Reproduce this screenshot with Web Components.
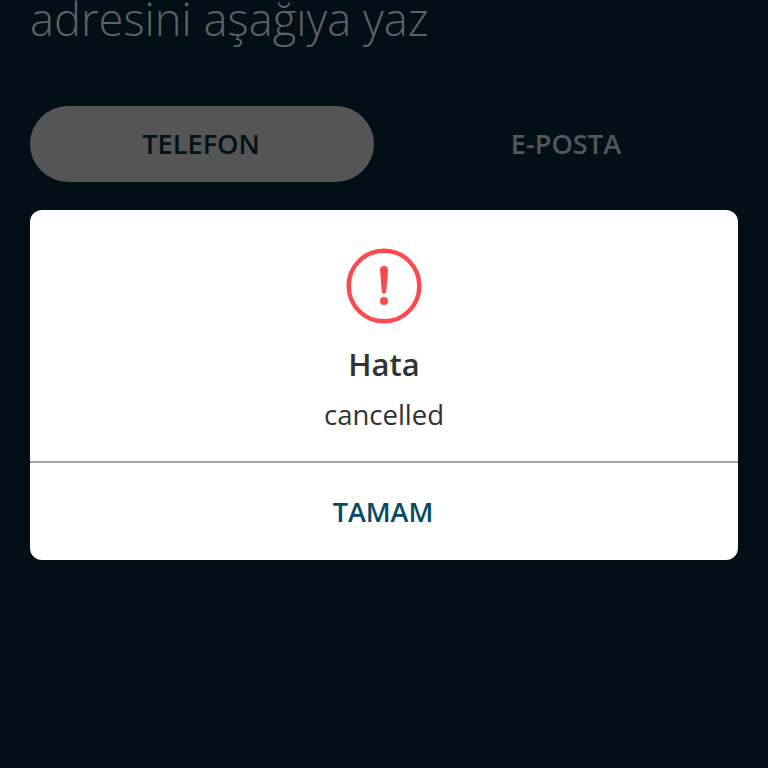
<!DOCTYPE html>
<html lang="tr"><head><meta charset="utf-8"><title>Hata</title>
<style>
html,body{margin:0;height:768px;overflow:hidden;background:#020f16}
body{font-family:"Open Sans","Liberation Sans",sans-serif}
</style></head><body>
<app-screen>
  <page-title>adresini aşağıya yaz</page-title>
  <tab-bar>
    <tab-item active>TELEFON</tab-item>
    <tab-item>E-POSTA</tab-item>
  </tab-bar>
  <alert-dialog heading="Hata" message="cancelled" action="TAMAM"></alert-dialog>
</app-screen>
<script>
function def(name, html, init){
  customElements.define(name, class extends HTMLElement{
    constructor(){super();this.attachShadow({mode:'open'}).innerHTML=html;}
    connectedCallback(){ if(init) init(this); }
  });
}
def('app-screen',`<style>:host{display:flex;flex-direction:column;padding:0 30px;height:768px;box-sizing:border-box;overflow:hidden}</style><slot></slot>`);
def('page-title',`<style>:host{display:block;height:106px;font-size:45.3px;font-weight:300;line-height:38px;color:#5e6264;white-space:nowrap}</style><slot></slot>`);
def('tab-bar',`<style>:host{display:grid;grid-template-columns:1fr 1fr;column-gap:20px;height:76px;margin-bottom:28px}</style><slot></slot>`);
def('tab-item',`<style>:host{display:flex;align-items:center;justify-content:center;border-radius:38px;font-size:27.2px;font-weight:600;color:#51575b;padding-bottom:1px;box-sizing:border-box}
:host([active]){background:#555555;color:#02121a;padding-right:2px}</style><slot></slot>`);
def('alert-dialog',`<style>
:host{display:block;background:#fff;border-radius:12px;height:350px;color:#333}
.body{box-sizing:border-box;padding-top:38px;display:flex;flex-direction:column;align-items:center;border-bottom:2px solid #a3a3a3;height:253px}
svg{display:block;width:76px;height:76px}
h2{margin:20px 0 0;font-size:31px;font-weight:600;line-height:40px;color:#333}
p{margin:13px 0 0;font-size:27.5px;line-height:36px;color:#333}
.act{height:97px;display:flex;align-items:center;justify-content:center;font-size:27px;font-weight:600;color:#064a63;padding-right:2px;box-sizing:border-box}
</style>
<div class="body">
<svg viewBox="0 0 76 76"><circle cx="38" cy="38" r="35.3" fill="none" stroke="#fb4a4f" stroke-width="4.4"/>
<path d="M34 22a4 4 0 0 1 8 0L40.2 43.4a2.2 2.2 0 0 1-4.4 0Z" fill="#fb4a4f"/><circle cx="38" cy="53" r="4" fill="#fb4a4f"/></svg>
<h2 id="h"></h2><p id="m"></p></div>
<div class="act" id="a"></div>`, el=>{
  const s=el.shadowRoot;
  s.getElementById('h').textContent=el.getAttribute('heading');
  s.getElementById('m').textContent=el.getAttribute('message');
  s.getElementById('a').textContent=el.getAttribute('action');
});
</script>
</body></html>
